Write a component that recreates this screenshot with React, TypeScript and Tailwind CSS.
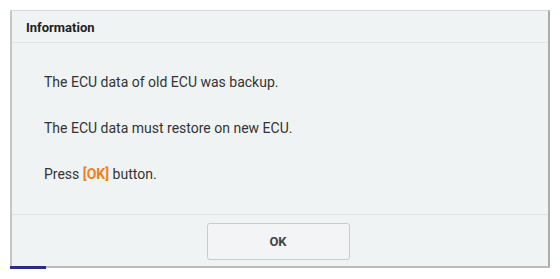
export default function App() {
  return (
    <div className="w-[560px] h-[279px] bg-white relative" style={{ fontFamily: "Roboto, 'Liberation Sans', sans-serif" }}>
      <div className="absolute left-[10px] top-[10px] w-[540px] h-[258px] bg-[#f0f3f4] border-l-2 border-t border-r-2 border-b-2 border-l-[#c4c7c8] border-t-[#d6d9da] border-r-[#a9adae] border-b-[#b9bcbd] flex flex-col">
        <div className="h-[32px] border-b border-[#dfe2e3] flex items-center pl-[14px] pt-[2px]">
          <span className="text-[13px] font-bold text-[#222]">Information</span>
        </div>
        <div className="flex-1 flex flex-col pl-[32px] pt-[32px] gap-[32px] text-[14px] text-[#333]">
          <div className="leading-[14px]">The ECU data of old ECU was backup.</div>
          <div className="leading-[14px]">The ECU data must restore on new ECU.</div>
          <div className="leading-[14px]">
            Press <span className="text-[#f07f22] font-bold">[OK]</span> button.
          </div>
        </div>
        <div className="h-[52px] border-t border-[#dfe2e3] flex items-start justify-center pt-[8px]">
          <div className="w-[143px] h-[37px] ml-[-4px] border border-[#c9cccd] rounded-[3px] bg-[#f2f4f5] flex items-center justify-center text-[13px] font-bold text-[#444]">
            OK
          </div>
        </div>
        <div className="absolute left-[-2px] bottom-[-3px] w-[36px] h-[3px] bg-[#2e2a8c]" />
      </div>
    </div>
  );
}
